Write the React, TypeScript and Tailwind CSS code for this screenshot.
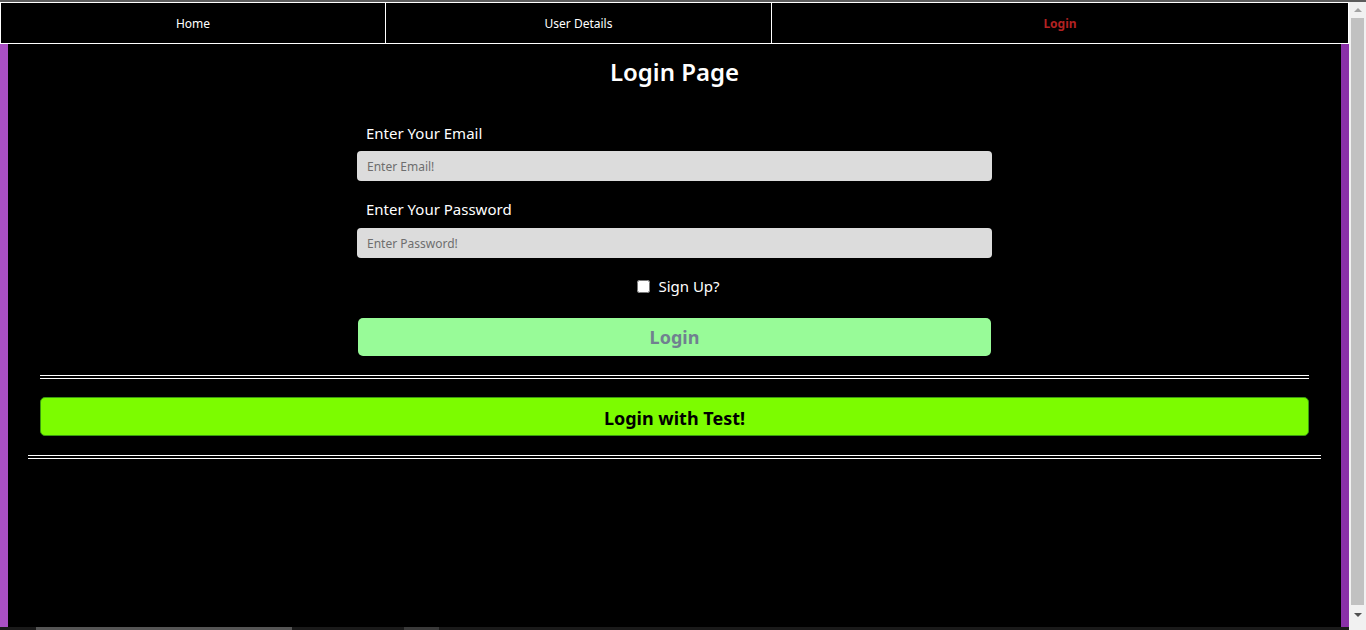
export default function App() {
  return (
    <div className="w-[1366px] h-[630px] overflow-hidden flex flex-col bg-black" style={{ fontFamily: '"Noto Sans", sans-serif' }}>
      <div className="h-[2px] bg-[#5c5c5c]" />
      <div className="flex flex-1 min-h-0">
        <div className="w-[1349px] flex flex-col bg-gradient-to-r from-[#aa50c4] to-[#8a30a8]">
          {/* Nav */}
          <nav className="flex h-[42px] border border-white bg-black text-[12px] text-white">
            <a className="w-[385px] flex items-center justify-center border-r border-white pt-[1px]">Home</a>
            <a className="w-[386px] flex items-center justify-center border-r border-white pt-[1px]">User Details</a>
            <a className="flex-1 flex items-center justify-center font-bold text-[#b22222] pt-[1px]">Login</a>
          </nav>

          <div className="flex-1 mx-[8px] bg-black text-white flex flex-col">
            <h1 className="text-center text-[24px] font-semibold mt-[12px] leading-[32px]">Login Page</h1>

            <form className="w-[635px] mx-auto mt-[34px] flex flex-col">
              <label className="text-[15px] pl-[9px] leading-[22px]">Enter Your Email</label>
              <input
                placeholder="Enter Email!"
                className="mt-[7px] h-[30px] rounded-[4px] bg-[#dcdcdc] px-[10px] text-[12px] text-black placeholder:text-[#6e6e6e] outline-none"
              />
              <label className="text-[15px] pl-[9px] leading-[22px] mt-[17px]">Enter Your Password</label>
              <input
                type="password"
                placeholder="Enter Password!"
                className="mt-[8px] h-[30px] rounded-[4px] bg-[#dcdcdc] px-[10px] text-[12px] text-black placeholder:text-[#6e6e6e] outline-none"
              />
              <div className="flex items-center justify-center mt-[17px] gap-[8px] pl-[8px]">
                <input type="checkbox" className="w-[13px] h-[13px]" />
                <span className="text-[15px] leading-[22px]">Sign Up?</span>
              </div>
              <button
                type="button"
                className="mt-[21px] mx-[1px] h-[38px] rounded-[5px] bg-[#98fb98] text-[#708090] font-bold text-[18px]"
              >
                Login
              </button>
            </form>

            <div className="mx-[32px] mt-[19px] h-[4px] border-y border-white" />
            <button
              type="button"
              className="mx-[32px] mt-[18px] h-[39px] pt-[3px] rounded-[5px] bg-[#7cfc00] border border-[#3a9a10] text-black font-bold text-[18px]"
            >
              Login with Test!
            </button>
            <div className="mx-[20px] mt-[19px] h-[4px] border-y border-white" />
          </div>

          <div className="h-[3px] bg-[#1a1a1a] flex">
            <div className="ml-[36px] w-[256px] bg-[#555]" />
            <div className="ml-[112px] w-[35px] bg-[#3a3a3a]" />
          </div>
        </div>

        {/* Scrollbar */}
        <div className="w-[17px] bg-[#f1f1f1] flex flex-col items-center">
          <div className="h-[16px] flex items-center justify-center">
            <div className="w-0 h-0 border-x-[4px] border-x-transparent border-b-[4px] border-b-[#a3a3a3]" />
          </div>
          <div className="w-[13px] flex-1 bg-[#c1c1c1]" />
          <div className="h-[25px] flex items-start pt-[8px] justify-center">
            <div className="w-0 h-0 border-x-[4px] border-x-transparent border-t-[4px] border-t-[#505050]" />
          </div>
        </div>
      </div>
    </div>
  );
}
